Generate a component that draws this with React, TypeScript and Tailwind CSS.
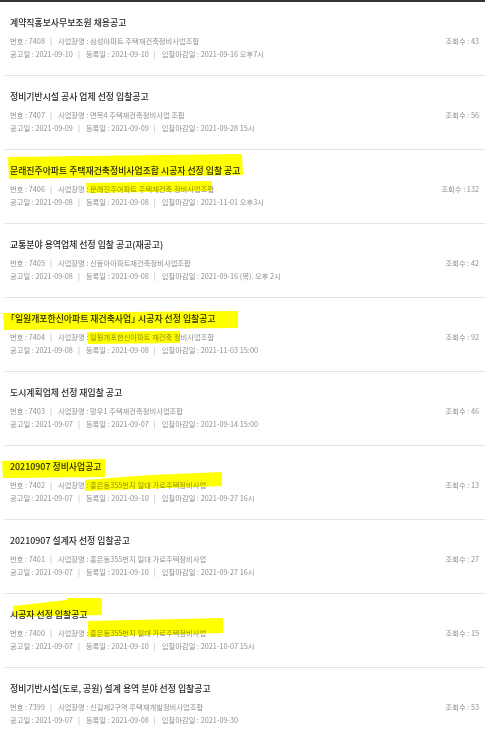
import React from "react";

type Item = {
  title: React.ReactNode;
  no: string;
  org: string;
  d1: string;
  d2: string;
  d3: string;
  views: string;
};

const items: Item[] = [
  { title: "계약직홍보사무보조원 채용공고", no: "7408", org: "삼성아파트 주택재건축정비사업조합", d1: "2021-09-10", d2: "2021-09-10", d3: "2021-09-16 오후7시", views: "43" },
  { title: "정비기반시설 공사 업체 선정 입찰공고", no: "7407", org: "면목4 주택재건축정비사업 조합", d1: "2021-09-09", d2: "2021-09-09", d3: "2021-09-28 15시", views: "56" },
  { title: "문래진주아파트 주택재건축정비사업조합 시공자 선정 입찰 공고", no: "7406", org: "문래진주아파트 주택재건축 정비사업조합", d1: "2021-09-08", d2: "2021-09-08", d3: "2021-11-01 오후3시", views: "132" },
  { title: "교통분야 용역업체 선정 입찰 공고(재공고)", no: "7405", org: "신동아아파트재건축정비사업조합", d1: "2021-09-08", d2: "2021-09-08", d3: "2021-09-16 (목). 오후 2시", views: "42" },
  {
    title: (
      <>
        <span className="-ml-[4px]">「</span>일원개포한신아파트 재건축사업<span className="tracking-[-4px]">」</span> 시공자 선정 입찰공고
      </>
    ),
    no: "7404", org: "일원개포한신아파트 재건축 정비사업조합", d1: "2021-09-08", d2: "2021-09-08", d3: "2021-11-03 15:00", views: "92",
  },
  { title: "도시계획업체 선정 재입찰 공고", no: "7403", org: "망우1 주택재건축정비사업조합", d1: "2021-09-07", d2: "2021-09-07", d3: "2021-09-14 15:00", views: "46" },
  { title: "20210907 정비사업공고", no: "7402", org: "흥은동355번지 일대 가로주택정비사업", d1: "2021-09-07", d2: "2021-09-10", d3: "2021-09-27 16시", views: "13" },
  { title: "20210907 설계자 선정 입찰공고", no: "7401", org: "흥은동355번지 일대 가로주택정비사업", d1: "2021-09-07", d2: "2021-09-10", d3: "2021-09-27 16시", views: "27" },
  { title: "시공자 선정 입찰공고", no: "7400", org: "흥은동355번지 일대 가로주택정비사업", d1: "2021-09-07", d2: "2021-09-10", d3: "2021-10-07 15시", views: "15" },
  { title: "정비기반시설(도로, 공원) 설계 용역 분야 선정 입찰공고", no: "7399", org: "신길제2구역 주택재개발정비사업조합", d1: "2021-09-07", d2: "2021-09-08", d3: "2021-09-30", views: "53" },
];

function Sep() {
  return <span className="pl-[5px] pr-[6px] text-[#aaa]">|</span>;
}

export default function App() {
  return (
    <div
      className="relative w-[494px] h-[730px] bg-white overflow-hidden"
      style={{ fontFamily: '"Noto Sans CJK KR", "Noto Sans", sans-serif' }}
    >
      <div className="w-[485px] border-t-2 border-[#333]">
        {items.map((it) => (
          <div
            key={it.no}
            className="ml-[5px] pl-[5px] pr-[6px] pt-[15px] pb-[14px] border-b border-[#e3e3e3]"
          >
            <div className="text-[8.9px] leading-[12px] text-[#2a2a2a] font-medium whitespace-nowrap">
              {it.title}
            </div>
            <div className="mt-[6px] flex justify-between text-[7.3px] leading-[13px] text-[#8f8f8f] whitespace-nowrap">
              <span>
                번호 : {it.no}
                <Sep />
                사업장명 : {it.org}
              </span>
              <span>조회수 : {it.views}</span>
            </div>
            <div className="text-[7.3px] leading-[13px] text-[#8f8f8f] whitespace-nowrap">
              공고일 : {it.d1}
              <Sep />
              등록일 : {it.d2}
              <Sep />
              입찰마감일 : {it.d3}
            </div>
          </div>
        ))}
      </div>
      <svg
        className="absolute left-0 top-0 pointer-events-none mix-blend-multiply"
        width="494"
        height="730"
        viewBox="0 0 494 730"
      >
        <g fill="#ffff00">
          <polygon points="8,157 242,154 243,175 9,179" />
          <polygon points="86,183 212,181 212,191 87,193" />
          <polygon points="3,313 238,311 238,328 4,330" />
          <polygon points="87,332 180,331 180,343 88,344" />
          <polygon points="2,461 105,459 105,477 3,478" />
          <polygon points="85,480 150,475 222,472 222,486 85,491" />
          <polygon points="13,606 67,600 67,598 102,598 102,615 14,617" />
          <polygon points="88,621 223,618 223,633 88,637" />
        </g>
      </svg>
    </div>
  );
}
